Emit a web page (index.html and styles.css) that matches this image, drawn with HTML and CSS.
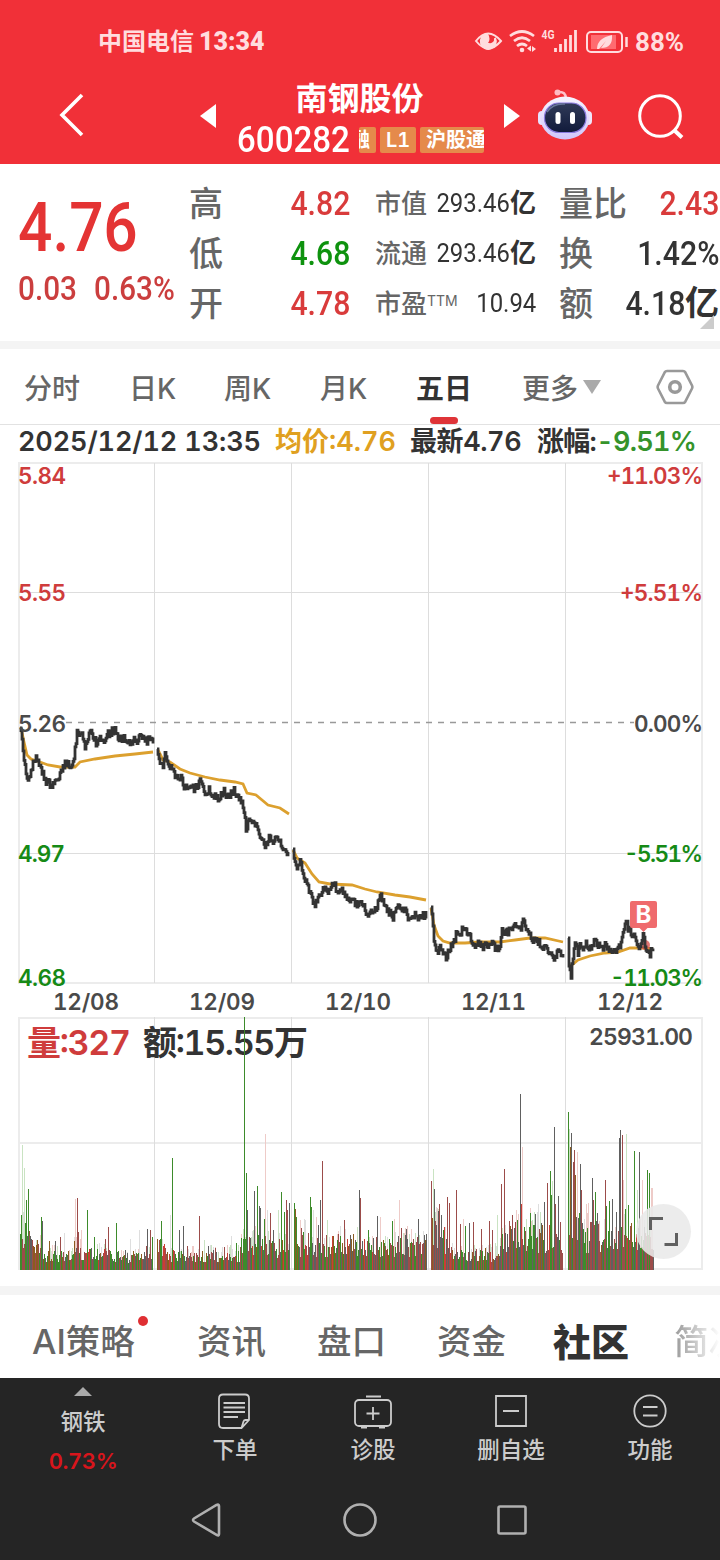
FILE: index.html
```html
<!DOCTYPE html>
<html lang="zh-CN">
<head>
    <meta charset="UTF-8">
    <meta name="viewport" content="width=device-width, initial-scale=1.0">
    <title>南钢股份 600282</title>
    <link rel="stylesheet" href="styles.css">
</head>
<body>
    <header class="header">
        <div class="status-bar">
            <span class="carrier">中国电信 <b>13:34</b></span>
            <svg class="status-icons" width="158" height="32" viewBox="474 26 158 32" fill="none" stroke="#ffdcde" stroke-width="2">
                <path d="M476 41 Q488 26 501 41 Q488 56 476 41Z"/>
                <path d="M487 34 A7.500 7.500 0 1 0 495 38 A5 5 0 0 1 487 43 Q490 39 487 34Z" fill="#ffdcde"/>
                <path d="M510 36 Q522 27 534 36 M514 41 Q522 34.500 530 41 M517 46 Q522 42 527 46" stroke-width="2.700"/>
                <circle cx="522" cy="50" r="2.300" fill="#ffdcde" stroke="none"/>
                <path d="M527 48.500l4-3v6zM532 46l4 3-4 3z" fill="#ffdcde" stroke="none"/>
                <text class="net" x="541.500" y="39" textLength="13" lengthAdjust="spacingAndGlyphs">4G</text>
                <path d="M555.500 48v4M560.500 44v8M565.500 39v13M570.500 35v17M575.500 30v22" stroke-width="2.800"/>
                <rect x="587" y="32" width="35" height="20" rx="4"/>
                <rect x="591" y="35" width="25" height="14" fill="#ff6b70" stroke="none"/>
                <path d="M597 49 Q597 38 612 35 Q613 48 601 48 L606 41 L599 49Z" fill="#ffdcde" stroke="none"/>
                <path d="M626.500 37v10" stroke-width="2.500"/>
            </svg>
            <b class="battery">88%</b>
        </div>
        <div class="title-bar">
            <svg class="back" width="26" height="44" viewBox="0 0 26 44"><path d="M23 2 L3 22 L23 42" fill="none" stroke="#fff" stroke-width="3.600"/></svg>
            <svg class="prev" width="16" height="24" viewBox="0 0 16 24"><path d="M16 0v24L0 12z" fill="#fff"/></svg>
            <div class="stock">
                <h1>南钢股份</h1>
                <div class="code">
                    <span class="code-no">600282</span>
                    <span class="tag tag-cut"><i>融</i></span>
                    <span class="tag tag-l1">L1</span>
                    <span class="tag tag-hgt">沪股通</span>
                </div>
            </div>
            <svg class="next" width="16" height="24" viewBox="0 0 16 24"><path d="M0 0v24l16-12z" fill="#fff"/></svg>
            <svg class="robot" width="56" height="52" viewBox="537 88 56 52">
                <defs>
                    <linearGradient id="shell" x1="0" y1="0" x2="0" y2="1"><stop offset="0" stop-color="#f7f4ff"/><stop offset="1" stop-color="#cfc5fb"/></linearGradient>
                    <linearGradient id="face" x1="0" y1="0" x2="0" y2="1"><stop offset="0" stop-color="#303a58"/><stop offset="1" stop-color="#111b3b"/></linearGradient>
                </defs>
                <path d="M558 92 Q566 91 566 99" fill="none" stroke="#ffc2cc" stroke-width="2.500"/>
                <circle cx="557.500" cy="92.500" r="3" fill="#ffb9c3"/>
                <rect x="538" y="111" width="8" height="14" rx="4" fill="#e6e2ff"/>
                <rect x="584" y="111" width="8" height="14" rx="4" fill="#f1e5fa"/>
                <ellipse cx="565" cy="118" rx="24.500" ry="21.500" fill="url(#shell)"/>
                <rect x="544.500" y="103" width="41.500" height="29.500" rx="14.500" fill="url(#face)" stroke="#8a7be0" stroke-width="1.200"/>
                <path d="M547 112 Q553 103 565 104" fill="none" stroke="#68769b" stroke-width="1.500"/>
                <rect x="555.500" y="112" width="5" height="12" rx="2.500" fill="#fff"/>
                <rect x="570" y="112" width="5" height="12" rx="2.500" fill="#fff"/>
            </svg>
            <svg class="search" width="46" height="48" viewBox="0 0 46 48"><g fill="none" stroke="#fff" stroke-width="3"><circle cx="22" cy="24" r="20.300"/><path d="M36 38 l8 7.500" stroke-width="4"/></g></svg>
        </div>
    </header>

    <section class="quote">
        <div class="price">
            <div class="last din-l">4.76</div>
            <div class="change"><span class="din-l">0.03</span><span class="din-l">0.63%</span></div>
        </div>
        <dl class="col col-big">
            <dt>高</dt><dd class="up"><span class="din-r">4.82</span></dd>
            <dt>低</dt><dd class="down"><span class="din-r">4.68</span></dd>
            <dt>开</dt><dd class="up"><span class="din-r">4.78</span></dd>
        </dl>
        <dl class="col col-small">
            <dt>市值</dt><dd><span class="din-r">293.46</span><b>亿</b></dd>
            <dt>流通</dt><dd><span class="din-r">293.46</span><b>亿</b></dd>
            <dt>市盈<sup>TTM</sup></dt><dd><span class="din-r">10.94</span></dd>
        </dl>
        <dl class="col col-big col-last">
            <dt>量比</dt><dd class="up"><span class="din-r">2.43</span></dd>
            <dt>换</dt><dd><span class="din-r">1.42%</span></dd>
            <dt>额</dt><dd><span class="din-r">4.18</span><b>亿</b></dd>
        </dl>
        <i class="corner"></i>
    </section>

    <nav class="period-tabs">
        <span>分时</span>
        <span>日K</span>
        <span>周K</span>
        <span>月K</span>
        <span class="active">五日</span>
        <span class="more">更多<i></i></span>
        <svg width="38" height="36" viewBox="0 0 38 36" fill="none" stroke="#999"><path d="M11 2h16q1.500 0 2.300 1.300L36 16.500q.7 1.500 0 3L29.300 32.700Q28.500 34 27 34H11q-1.500 0-2.300-1.300L2 19.500q-.7-1.500 0-3L8.700 3.300Q9.500 2 11 2z" stroke-width="2.600"/><circle cx="19" cy="18" r="5.300" stroke-width="3.600"/></svg>
    </nav>

    <div class="chart-info">
        <span class="time">2025/12/12 13:35</span>
        <span class="avg">均价:4.76</span>
        <span class="newest">最新4.76</span>
        <span class="range">涨幅:<em>-9.51%</em></span>
    </div>

    <svg class="price-chart" width="720" height="555" viewBox="0 462 720 555">
        <g class="grid-outer"><path d="M19 463H702M19 983H702M19 462V984M702 462V984"/></g>
        <g class="grid"><path d="M19 592.500H702M19 853.500H702M154.500 463V983M291.500 463V983M428.500 463V983M565.500 463V983"/></g>
        <path class="base-line" d="M66 722.500H634"/>
        <g id="avgLines"></g>
        <circle cx="645" cy="945" r="5" fill="#d9534f" opacity=".8"/>
        <g id="priceLines"></g>
        <g class="axis">
            <text x="18" y="484" textLength="48" class="t-up">5.84</text>
            <text x="18" y="601" textLength="48" class="t-up">5.55</text>
            <text x="18" y="732" textLength="48">5.26</text>
            <text x="18" y="862" textLength="47" class="t-down">4.97</text>
            <text x="18" y="986" textLength="48" class="t-down">4.68</text>
            <text x="607" y="484" textLength="96" class="t-up">+11.03%</text>
            <text x="620" y="601" textLength="83" class="t-up">+5.51%</text>
            <text x="634" y="732" textLength="69">0.00%</text>
            <text x="624" y="862" textLength="79" class="t-down">-5.51%</text>
            <text x="610" y="986" textLength="93" class="t-down">-11.03%</text>
            <text x="53" y="1010" textLength="66">12/08</text>
            <text x="189" y="1010" textLength="66">12/09</text>
            <text x="325" y="1010" textLength="66">12/10</text>
            <text x="461" y="1010" textLength="65">12/11</text>
            <text x="597" y="1010" textLength="66">12/12</text>
        </g>
        <path d="M632 901h23q2 0 2 2v23q0 2-2 2h-7.500l-4 4-4-4H632q-2 0-2-2v-23q0-2 2-2z" fill="#ef6b6d"/>
        <text class="buy" x="643.500" y="923" text-anchor="middle">B</text>
    </svg>

    <svg class="volume-chart" width="720" height="269" viewBox="0 1017 720 269">
        <g class="grid-outer"><path d="M19 1018H702M19 1143H702M19 1269H702M19 1017V1270M702 1017V1270"/></g>
        <g class="grid"><path d="M154.500 1017V1270M291.500 1017V1270M428.500 1017V1270M565.500 1017V1270"/></g>
        <g class="vol-text">
            <text x="27" y="1055" textLength="104" class="t-up">量:327</text>
            <text x="143" y="1055" textLength="165" class="t-dark">额:15.55万</text>
            <text x="589" y="1045" textLength="104" class="vol-max">25931.00</text>
        </g>
        <g id="volumeBars" shape-rendering="crispEdges"></g>
        <circle cx="663.500" cy="1231.500" r="27.500" fill="#e9e9e9" fill-opacity=".88"/>
        <path d="M650.500 1230v-11.500H663M664.500 1244.500H676.500V1233" fill="none" stroke="#606060" stroke-width="3"/>
    </svg>

    <nav class="info-tabs">
        <span class="dot">AI策略</span>
        <span>资讯</span>
        <span>盘口</span>
        <span>资金</span>
        <span class="active">社区</span>
        <span class="fade">简况</span>
    </nav>

    <footer class="footer">
        <div class="tool-bar">
            <div class="sector">
                <i></i>
                <span>钢铁</span>
                <b>0.73%</b>
            </div>
            <div class="tool">
                <svg width="38" height="38" viewBox="0 0 38 38"><path d="M7 2.500H29Q33 2.500 33 6.500V28L25.500 36H7Q3 36 3 32V6.500Q3 2.500 7 2.500zM33 28h-3.500q-1.500 0-2 1.500L25.500 36M7.500 11H29M7.500 15.500H29M7.500 20H29M7.500 25H22"/></svg>
                <span>下单</span>
            </div>
            <div class="tool">
                <svg width="38" height="38" viewBox="0 0 38 38"><rect x="1" y="8" width="36" height="26" rx="4"/><path d="M12 4.500H27M19 15v13M12.500 21.500h13M7 35.500h6M25 35.500h6"/></svg>
                <span>诊股</span>
            </div>
            <div class="tool">
                <svg width="38" height="38" viewBox="0 0 38 38"><path d="M4 4H34V34H4zM11 19H27"/></svg>
                <span>删自选</span>
            </div>
            <div class="tool">
                <svg width="38" height="38" viewBox="0 0 38 38"><circle cx="19" cy="19" r="15.700"/><path d="M12 15H26.500M12 23.500H26.500"/></svg>
                <span>功能</span>
            </div>
        </div>
        <div class="system-nav">
            <svg width="34" height="38" viewBox="0 0 34 38"><path d="M25.500 4 Q28 3 28 5V33Q28 35 26 34L3 20.500Q1 19 3 17.500z"/></svg>
            <svg width="38" height="38" viewBox="0 0 38 38"><circle cx="19" cy="19" r="15.500"/></svg>
            <svg width="34" height="38" viewBox="0 0 34 38"><rect x="3.500" y="5.500" width="27" height="27" rx="1.500"/></svg>
        </div>
    </footer>

    <script src="chart.js"></script>
</body>
</html>
```

FILE: styles.css
```css
body {
  margin: 0;
  width: 720px;
  height: 1560px;
  overflow: hidden;
  background-color: #fff;
  color: #333;
  font-family: Inter, 'Noto Sans CJK SC', sans-serif;
  font-variant-numeric: tabular-nums;
}

svg {
  display: block;
  flex: none;
}

i,
em {
  font-style: normal;
}

/* header */
.header {
  height: 164px;
  background-color: #f13038;
  color: #fff;
}

.status-bar {
  display: flex;
  align-items: center;
  box-sizing: border-box;
  height: 84px;
  padding-left: 98px;
  color: #ffdcde;
  font-family: Roboto, 'Noto Sans CJK SC', sans-serif;
  font-size: 24px;
}

.carrier {
  width: 376px;
  font-weight: 700;
  line-height: 34px;
  white-space: pre;
}

.carrier b {
  margin-left: -1px;
  font-size: 25px;
}

.battery {
  margin-left: 3px;
  font-size: 26px;
}

.net {
  font: 700 13px Roboto, sans-serif;
  fill: #ffdcde;
  stroke: none;
}

.title-bar {
  display: flex;
  align-items: flex-start;
  height: 80px;
  padding-left: 59px;
}

.back {
  margin-top: 9px;
}

.prev {
  margin: 20px 0 0 115px;
}

.stock {
  width: 248px;
  margin: -4px 19px 0 21px;
}

.stock h1 {
  margin: 0;
  font-size: 32px;
  font-weight: 700;
  line-height: 38px;
  text-align: center;
  text-indent: -3px;
}

.code {
  display: flex;
  align-items: center;
  height: 44px;
  white-space: nowrap;
}

.code-no {
  width: 122px;
  font-family: Roboto, sans-serif;
  font-size: 36px;
  font-weight: 500;
  line-height: 46px;
  transform: scaleX(0.92);
  transform-origin: left;
}

.tag {
  box-sizing: border-box;
  height: 26px;
  border-radius: 2px;
  background-color: #e58a4b;
  font-size: 20px;
  font-weight: 600;
  line-height: 26px;
  overflow: hidden;
}

.tag-cut {
  display: flex;
  justify-content: flex-end;
  width: 17px;
  padding-right: 6px;
}

.tag-l1 {
  width: 36px;
  margin: 0 4px;
  text-align: center;
}

.tag-hgt {
  width: 64px;
  padding-left: 6px;
}

.next {
  margin-top: 20px;
}

.robot {
  margin: 4px 0 0 17px;
}

.search {
  margin: 8px 0 0 45px;
}

/* quote */
.quote {
  position: relative;
  display: grid;
  grid-template-columns: 189px 186px 184px 161px;
  height: 177px;
  border-bottom: 8px solid #f4f4f4;
  font-family: Roboto, 'Noto Sans CJK SC', sans-serif;
}

.din-l,
.din-r {
  display: inline-block;
  transform: scaleX(0.89);
  transform-origin: left;
}

.din-r {
  transform-origin: right;
}

.price {
  padding-left: 18px;
  color: #e43434;
}

.last {
  height: 76px;
  margin-top: 25px;
  font-size: 68px;
  font-weight: 500;
  line-height: 78px;
}

.change {
  display: grid;
  grid-template-columns: 76px auto;
  margin-top: 1px;
  font-size: 33px;
  line-height: 46px;
  color: #cb3e3e;
}

.change .din-l {
  font-weight: 500;
  transform: scaleX(0.9);
}

.col {
  display: grid;
  grid-template-columns: 50px 1fr;
  grid-auto-rows: 50px;
  width: 161px;
  height: 150px;
  margin: 14px 0 0;
  line-height: 50px;
  white-space: nowrap;
}

.col dt {
  padding-top: 1px;
  color: #666;
  font-weight: 500;
}

.col dd {
  margin: 0;
  text-align: right;
  font-weight: 500;
}

.col-big {
  font-size: 34px;
}

.col-small {
  font-size: 26px;
}

.col-small .din-r {
  font-weight: 400;
  transform: scaleX(0.92);
}

.col-last {
  width: 160px;
}

.col sup {
  font-family: Inter, sans-serif;
  font-size: 14px;
  font-weight: 400;
  line-height: 0;
  vertical-align: 7px;
}

.col .up {
  color: #d93b3b;
}

.col .down {
  color: #0e920e;
}

.corner {
  position: absolute;
  right: 6px;
  bottom: 12px;
  border: 7px solid #ccc;
  border-top-color: transparent;
  border-left-color: transparent;
}

/* period tabs */
.period-tabs {
  display: grid;
  grid-template-columns: 105px 95px 96px 96px 106px 134px 38px;
  align-items: center;
  box-sizing: border-box;
  height: 76px;
  padding-left: 24px;
  border-bottom: 1px solid #e2e2e2;
  color: #666;
  font-size: 28px;
  font-weight: 500;
}

.period-tabs .active {
  position: relative;
  color: #333;
  font-weight: 700;
}

.period-tabs .active::after {
  content: '';
  position: absolute;
  left: 14px;
  bottom: -17px;
  width: 28px;
  height: 7px;
  border-radius: 4px;
  background-color: #df3438;
}

.more {
  display: flex;
  align-items: center;
}

.more i {
  margin-left: 5px;
  border: 9px solid transparent;
  border-top: 14px solid #aaa;
  border-bottom: 0;
}

.chart-info {
  display: grid;
  grid-template-columns: 257px 135px 127px auto;
  height: 37px;
  padding-left: 18px;
  font-size: 27px;
  font-weight: 600;
  line-height: 33px;
  white-space: nowrap;
}

.chart-info .time {
  letter-spacing: -0.1px;
}

.chart-info .avg {
  color: #e0a020;
}

.chart-info .newest,
.chart-info .range {
  letter-spacing: -0.4px;
}

.chart-info .range {
  letter-spacing: -0.7px;
}

.chart-info em {
  color: #35932b;
}

/* charts */
.grid {
  stroke: #ddd;
  stroke-width: 1;
}

.grid-outer {
  stroke: #ececec;
  stroke-width: 2;
}

.base-line {
  stroke: #999;
  stroke-width: 1.5;
  stroke-dasharray: 6 6;
}

#avgLines path {
  fill: none;
  stroke: #dca02e;
  stroke-width: 2.8;
}

#priceLines path {
  fill: none;
  stroke: #333;
  stroke-width: 2.8;
}

.axis {
  fill: #4a4a4a;
  font-size: 22.5px;
  font-weight: 600;
}

.t-up {
  fill: #cf3c3c;
}

.t-down {
  fill: #168a16;
}

.t-dark {
  fill: #333;
}

.buy {
  fill: #fff;
  font-size: 24px;
  font-weight: 700;
}

.vol-text {
  font-size: 34px;
  font-weight: 600;
}

.vol-max {
  fill: #4a4a4a;
  font-size: 23px;
}

/* bottom tabs */
.info-tabs {
  display: grid;
  grid-template-columns: 165px 120px 120px 116px 121px 78px;
  align-items: center;
  box-sizing: border-box;
  width: 720px;
  height: 92px;
  padding: 11px 0 0 32px;
  border-top: 9px solid #f4f4f4;
  color: #666;
  font-size: 34.5px;
  font-weight: 500;
  line-height: 72px;
  white-space: nowrap;
}

.info-tabs .dot {
  position: relative;
}

.info-tabs .dot::after {
  content: '';
  position: absolute;
  left: 106px;
  top: 10px;
  width: 10px;
  height: 10px;
  border-radius: 50%;
  background-color: #df2f33;
}

.info-tabs .active {
  color: #333;
  font-size: 38px;
  font-weight: 900;
}

.info-tabs .fade {
  color: transparent;
  background: linear-gradient(to right, #999, #fff 46px);
  -webkit-background-clip: text;
  background-clip: text;
}

/* footer */
.footer {
  height: 182px;
  background-color: #252525;
}

.tool-bar {
  display: grid;
  grid-template-columns: 166px 138px 138px 138px 140px;
  height: 106px;
  color: #ccc;
  font-size: 22.5px;
  font-weight: 500;
}

.sector,
.tool {
  display: flex;
  flex-direction: column;
  align-items: center;
}

.sector i {
  margin-top: 9px;
  border: 9px solid transparent;
  border-top: 0;
  border-bottom: 9px solid #aaa;
}

.sector span {
  margin-top: 6px;
  line-height: 40px;
}

.sector b {
  color: #d8151c;
  font-size: 22px;
  font-weight: 600;
  letter-spacing: -0.4px;
  line-height: 39px;
}

.tool svg {
  margin-top: 14px;
  fill: none;
  stroke: #ccc;
  stroke-width: 1.8;
}

.tool span {
  line-height: 40px;
}

.system-nav {
  display: flex;
  justify-content: center;
  gap: 116px;
  padding-top: 17px;
}

.system-nav svg {
  fill: none;
  stroke: #b0b0b0;
  stroke-width: 2.6;
}
```

FILE: chart.js
```js
// price / average points per day: x,y
const prices = [
    "20,728 23,748 25,768 28,780 31,770 35,758 38,763 42,773 46,781 51,785 56,779 60,775 63,767 66,763 69,766 71,771 73,765 75,750 77,732 80,738 82,732 85,747 88,739 91,730 94,740 96,743 99,735 101,744 104,741 108,732 110,734 112,730 115,731 118,741 122,738 126,740 130,745 134,740 137,742 141,735 144,742 149,740 153,743",
    "157,749 160,763 163,764 165,756 168,764 171,766 174,773 178,780 181,778 184,788 190,788 197,788 200,781 203,788 206,793 209,790 212,797 218,798 224,792 228,796 234,791 238,796 240,800 243,807 246,828 249,822 254,822 258,831 262,839 265,844 268,840 270,835 273,842 277,840 280,843 283,850 286,855 288,853",
    "293,849 295,860 297,868 300,862 303,873 307,885 310,893 314,905 317,900 320,898 322,890 325,885 328,891 331,885 334,882 337,892 340,886 344,891 348,900 352,899 356,903 362,903 365,910 368,918 371,910 374,914 377,905 380,893 383,901 388,911 393,917 396,908 400,906 404,910 408,917 413,914 418,918 426,914",
    "431,907 433,925 434,940 436,949 438,957 440,943 442,951 446,958 450,947 454,943 457,930 460,935 463,927 466,928 470,938 473,946 478,944 482,947 485,944 488,950 492,942 496,950 500,945 502,930 507,932 511,929 516,926 520,930 523,922 527,930 530,932 533,942 537,939 541,946 546,949 550,955 553,958 557,954 560,950 563,957",
    "568,938 569,965 571,975 573,955 575,944 578,952 580,941 583,952 586,944 590,948 594,941 598,945 602,950 605,941 608,948 611,954 615,949 620,948 623,935 626,921 628,928 632,933 636,942 639,947 643,937 646,948 650,954 653,949"
];

const averages = [
    "21,728 24,742 27,755 31,759 40,762 48,765 60,767 75,767 80,762 95,759 115,756 135,754 153,752",
    "158,750 163,760 170,762 180,769 190,773 205,777 220,780 235,782 243,784 247,793 256,795 268,805 280,808 289,814",
    "293,850 297,858 305,863 312,874 319,882 330,884 352,885 365,889 377,892 395,895 410,897 426,900",
    "431,908 434,925 438,936 443,941 450,943 465,943 480,942 500,942 515,940 530,938 545,938 563,942",
    "570,966 573,964 578,960 590,956 605,953 618,952 630,948 645,948 653,949"
];

// usual bar height by x: [from, to, height at from, height at to]
const levels = [
    [20, 30, 42, 34], [30, 44, 26, 20], [44, 74, 15, 14], [74, 84, 22, 16], [84, 140, 17, 14], [140, 153, 18, 20],
    [157, 166, 26, 18], [166, 240, 15, 15], [240, 268, 26, 28], [268, 290, 26, 20],
    [294, 312, 36, 28], [312, 342, 26, 26], [342, 427, 27, 26],
    [431, 450, 42, 28], [450, 500, 17, 16], [500, 520, 26, 40], [520, 563, 38, 32],
    [568, 580, 66, 50], [580, 618, 40, 32], [618, 654, 38, 34]
];

// r red, d dark red, g green, k grey, o brown, p/l/w pale red, green, grey
const spikes = "22,1145,l 24,1168,l 26,1200,g 28,1189,g 41,1217,g 42,1221,k 49,1241,o 55,1241,k 60,1237,d 64,1233,w 75,1199,p 77,1198,d 78,1232,d 81,1230,p 87,1210,g 94,1237,g 105,1239,d 108,1227,d 116,1223,g 130,1239,w 139,1230,w 147,1229,k 150,1230,d 152,1237,g " +
    "161,1221,g 165,1248,d 170,1215,w 172,1158,g 179,1230,k 183,1226,k 187,1246,d 199,1216,d 204,1240,l 208,1246,k 215,1248,d 224,1247,d 231,1236,w 236,1243,g 241,1238,g 246,1173,g 247,1210,k 254,1191,k 257,1186,g 259,1206,k 260,1208,k 264,1219,g 265,1134,p 267,1210,w 270,1213,d 273,1230,k 278,1210,l 281,1192,g 284,1212,g 286,1200,d 287,1210,d 289,1203,k " +
    "294,1203,g 295,1209,o 296,1217,g 300,1220,p 303,1232,g 310,1197,g 311,1207,g 313,1210,w 316,1217,p 318,1225,k 320,1200,k 322,1161,d 327,1220,l 332,1236,r 338,1234,d 344,1220,d 350,1236,k 359,1190,k 360,1198,d 368,1230,g 377,1216,k 380,1217,p 392,1221,g 394,1219,p 399,1200,p 401,1228,d 406,1229,k 418,1219,k 424,1235,k 426,1234,k " +
    "431,1181,d 433,1169,l 434,1189,k 438,1211,k 439,1204,d 441,1215,k 447,1197,d 449,1203,d 456,1190,d 460,1224,d 463,1219,p 465,1226,g 469,1223,k 473,1222,d 481,1229,d 489,1221,d 492,1230,d 497,1215,l 501,1184,d 504,1169,d 509,1221,d 512,1215,d 515,1222,d 520,1094,k 522,1147,p 521,1204,r 530,1213,g 535,1214,k 538,1204,w 544,1202,k 547,1183,d 550,1171,g 551,1195,g 552,1181,l 554,1127,k 555,1204,d 558,1196,k 560,1222,d " +
    "568,1112,g 569,1129,l 570,1147,o 571,1133,k 573,1162,d 574,1150,d 575,1175,o 577,1152,p 580,1164,k 581,1190,d 586,1204,p 588,1203,p 592,1178,k 593,1200,d 595,1192,g 597,1213,k 605,1180,d 606,1206,g 609,1201,g 612,1199,k 616,1212,k 619,1138,k 620,1130,k 622,1135,d 623,1180,p 625,1209,g 626,1134,l 628,1205,g 634,1151,g 637,1190,l 639,1152,k 642,1180,p 647,1170,g 649,1173,g 651,1188,p 652,1188,p";

const colors = { r: "#cb3d35", d: "#9c4c4a", g: "#3d8b2b", k: "#606060", o: "#8b5c20", p: "#eecbc8", l: "#c9e3c2", w: "#dedede" };
const order = "dgkdgkorgdkkodgg";

let seed = 17;
function rand() {
    seed = (seed * 16807) % 2147483647;
    return seed / 2147483647;
}

function add(parentId, name, attrs) {
    const el = document.createElementNS("http://www.w3.org/2000/svg", name);
    for (const key in attrs) {
        el.setAttribute(key, attrs[key]);
    }
    document.getElementById(parentId).appendChild(el);
}

function toPoints(text) {
    return text.split(" ").map(p => p.split(",").map(Number));
}

averages.forEach(day => add("avgLines", "path", { d: "M" + day }));

// minute ticks between the stored points
prices.forEach(day => {
    const pts = toPoints(day);
    let d = "M" + pts[0];
    for (let i = 1; i < pts.length; i++) {
        const [x0, y0] = pts[i - 1];
        const [x1, y1] = pts[i];
        const steps = Math.max(1, Math.round(x1 - x0));
        for (let s = 1; s <= steps; s++) {
            const y = y0 + (y1 - y0) * s / steps + (rand() - 0.5) * 8;
            d += `H${x0 + (x1 - x0) * s / steps}V${y.toFixed(1)}`;
        }
    }
    add("priceLines", "path", { d: d });
});

function bar(x, height, color) {
    add("volumeBars", "rect", { x: x, y: 1270 - height, width: 1, height: height, fill: colors[color] });
}

levels.forEach(([from, to, h0, h1]) => {
    for (let x = from; x < to; x++) {
        const level = h0 + (h1 - h0) * (x - from) / (to - from);
        const color = order[Math.floor(rand() * order.length)];
        if (rand() > 0.72) {
            bar(x, Math.round(level * (1.2 + rand() * 0.5)), "plw"[Math.floor(rand() * 3)]);
        }
        bar(x, Math.round(level * (0.5 + rand() * 0.85)), color);
    }
});

spikes.split(" ").forEach(item => {
    const [x, y, color] = item.split(",");
    const pale = "plw".includes(color);
    bar(Number(x), 1270 - y, color);
    if (pale) {
        bar(Number(x), Math.round((1270 - y) * 0.25), "d");
    }
});
bar(244, 253, "g");
```
